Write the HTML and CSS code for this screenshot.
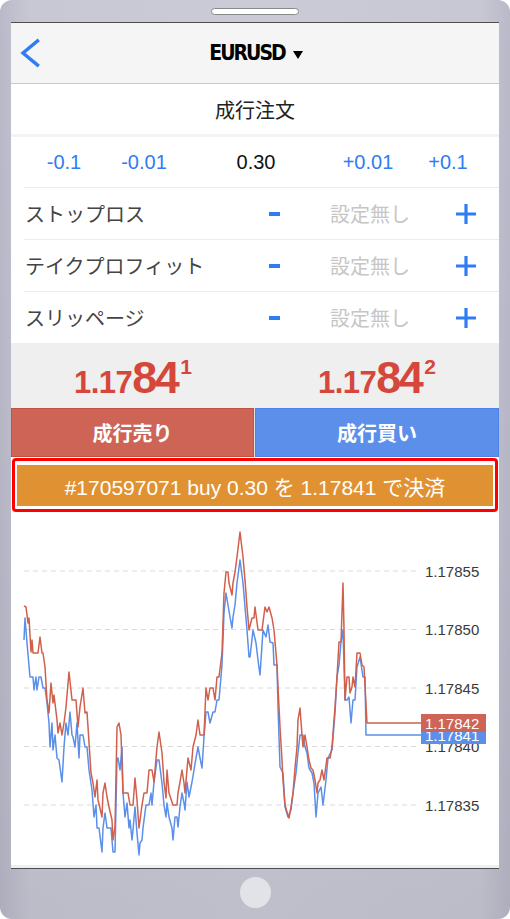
FILE: index.html
```html
<!DOCTYPE html>
<html lang="ja">
<head>
<meta charset="utf-8">
<title>EURUSD 成行注文</title>
<link rel="stylesheet" href="styles.css">
</head>
<body>
<div class="device">
  <div class="top-bezel"><div class="speaker"></div></div>
  <div class="screen">
    <header class="nav">
      <div class="back">
        <svg width="20" height="30" viewBox="0 0 20 30"><path d="M17.5 3 L3 15 L17.5 27" fill="none" stroke="#2f7cf3" stroke-width="3.4" stroke-linecap="square"/></svg>
      </div>
      <div class="title"><span class="title-text">EURUSD</span><svg class="caret" width="10" height="8" viewBox="0 0 10 8"><path d="M0 0 H10 L5 8 Z" fill="#000"/></svg></div>
      <div></div>
    </header>
    <div class="order-title">成行注文</div>
    <div class="divider"></div>
    <div class="lots">
      <span class="lot-step">-0.1</span>
      <span class="lot-step">-0.01</span>
      <span class="lot-value">0.30</span>
      <span class="lot-step">+0.01</span>
      <span class="lot-step">+0.1</span>
    </div>
    <div class="field">
      <span class="field-label">ストップロス</span>
      <span class="field-btn"><svg width="11" height="4" viewBox="0 0 11 4"><rect width="11" height="4" fill="#2f7cf3"/></svg></span>
      <span class="field-value">設定無し</span>
      <span class="field-btn"><svg width="20" height="20" viewBox="0 0 20 20"><path d="M10 0 V20 M0 10 H20" stroke="#2f7cf3" stroke-width="3.2"/></svg></span>
    </div>
    <div class="field">
      <span class="field-label">テイクプロフィット</span>
      <span class="field-btn"><svg width="11" height="4" viewBox="0 0 11 4"><rect width="11" height="4" fill="#2f7cf3"/></svg></span>
      <span class="field-value">設定無し</span>
      <span class="field-btn"><svg width="20" height="20" viewBox="0 0 20 20"><path d="M10 0 V20 M0 10 H20" stroke="#2f7cf3" stroke-width="3.2"/></svg></span>
    </div>
    <div class="field field-last">
      <span class="field-label">スリッページ</span>
      <span class="field-btn"><svg width="11" height="4" viewBox="0 0 11 4"><rect width="11" height="4" fill="#2f7cf3"/></svg></span>
      <span class="field-value">設定無し</span>
      <span class="field-btn"><svg width="20" height="20" viewBox="0 0 20 20"><path d="M10 0 V20 M0 10 H20" stroke="#2f7cf3" stroke-width="3.2"/></svg></span>
    </div>
    <div class="prices">
      <div class="price"><span class="p-small">1.17</span><span class="p-big">84</span><span class="p-sup">1</span></div>
      <div class="price"><span class="p-small">1.17</span><span class="p-big">84</span><span class="p-sup">2</span></div>
    </div>
    <div class="trade">
      <div class="trade-btn sell">成行売り</div>
      <div class="trade-btn buy">成行買い</div>
    </div>
    <div class="close-wrap">
      <div class="close-box">
        <div class="close-btn">#170597071 buy 0.30 を 1.17841 で決済</div>
      </div>
    </div>
    <div class="chart">
      <svg width="488" height="352" viewBox="11 513 488 352">
        <g class="grid">
          <line x1="24" x2="418" y1="571" y2="571"/>
          <line x1="24" x2="418" y1="629.5" y2="629.5"/>
          <line x1="24" x2="418" y1="688" y2="688"/>
          <line x1="24" x2="418" y1="746.5" y2="746.5"/>
          <line x1="24" x2="418" y1="805" y2="805"/>
        </g>
        <g class="axis-label">
          <text x="425" y="576.5">1.17855</text>
          <text x="425" y="635">1.17850</text>
          <text x="425" y="693.5">1.17845</text>
          <text x="425" y="752">1.17840</text>
          <text x="425" y="810.5">1.17835</text>
        </g>
        <polyline class="line-blue" points="24,640 25,618 27,643 30,677 33,677 34,690 36,677 37,690 39,677 41,677 43,688 45,688 47,703 49,723 50,747 52,723 53,750 55,735 57,758 59,760 62,782 64,747 66,723 68,735 70,712 72,735 73,737 75,747 77,723 79,758 80,735 83,735 85,747 87,747 89,770 92,790 94,817 96,805 97,828 99,828 102,852 103,828 105,813 107,828 111,828 113,852 115,852 117,758 118,758 120,770 122,747 123,793 125,817 127,803 129,828 130,820 132,840 133,830 135,807 137,833 139,855 140,843 142,840 143,828 146,805 149,805 151,793 152,805 154,782 157,760 159,760 162,783 164,805 166,817 167,803 169,817 172,828 173,840 175,817 177,817 178,827 180,807 182,793 184,803 185,810 187,782 189,797 192,782 194,770 196,758 198,747 200,758 202,768 204,737 206,712 208,712 210,723 213,712 215,712 217,700 219,700 222,665 224,613 226,593 228,605 230,617 232,628 233,617 235,605 237,583 240,560 243,583 245,607 247,630 249,657 250,657 253,630 256,643 258,660 260,675 263,630 266,637 268,625 270,642 273,643 274,665 277,665 278,707 280,767 283,773 285,807 288,817 291,810 293,793 296,773 298,753 300,735 303,735 305,747 307,753 309,768 312,773 314,783 316,817 318,793 321,787 323,805 326,780 328,758 332,750 335,713 337,677 339,665 341,642 343,630 345,700 347,700 349,697 351,723 353,700 355,700 357,667 360,657 363,677 365,677 366,735 421,735"/>
        <polyline class="line-red" points="24,606 26,607 28,623 29,618 31,652 32,640 33,653 38,653 40,637 42,653 43,653 45,667 47,700 49,713 51,683 53,703 54,695 57,720 58,733 60,723 62,735 64,723 66,707 69,672 72,700 76,700 78,727 80,707 83,688 85,713 87,712 88,727 91,773 93,783 95,797 97,780 98,800 102,817 103,793 105,783 107,797 109,807 112,820 113,840 115,827 117,727 119,723 121,735 123,793 128,793 130,805 133,805 135,778 137,800 139,828 142,805 144,793 147,793 149,770 152,770 154,782 157,747 159,732 162,753 164,782 166,798 167,770 169,793 173,805 177,805 178,793 180,782 182,770 184,783 185,793 188,758 191,770 193,747 196,735 198,720 200,735 204,735 206,688 208,700 210,688 213,688 215,700 217,677 219,677 222,653 224,593 226,572 228,572 229,583 232,595 233,583 235,572 237,557 240,532 243,557 245,580 247,607 249,630 252,618 254,618 255,607 257,622 258,630 262,630 265,607 267,612 269,607 272,618 274,630 277,665 278,687 280,727 282,760 283,780 285,805 287,812 289,818 291,807 293,793 295,768 297,747 298,720 300,708 302,735 303,747 305,735 307,747 309,760 311,768 313,770 315,780 317,793 318,783 320,780 322,770 324,780 327,758 330,758 332,747 335,707 337,677 339,642 341,642 343,583 344,630 345,700 347,677 349,677 350,693 352,687 353,677 355,687 357,653 360,653 362,665 364,667 367,723 421,723"/>
        <rect class="tag-blue" x="421" y="726" width="65" height="18"/>
        <text class="tag-text" x="425" y="740.5">1.17841</text>
        <rect class="tag-red" x="421" y="714" width="65" height="18"/>
        <text class="tag-text" x="425" y="728.5">1.17842</text>
      </svg>
    </div>
    <div class="screen-foot"></div>
  </div>
  <div class="bottom-bezel"><div class="home"></div></div>
</div>
</body>
</html>
```
FILE: styles.css
```css
* { box-sizing: border-box; }

body {
  margin: 0;
  background: #fff;
  font-family: "Liberation Sans", Arial, "Noto Sans CJK JP", sans-serif;
}

.device {
  width: 510px;
  height: 919px;
  border-radius: 12px;
  padding: 0 11px;
  display: flex;
  flex-direction: column;
  background:
    linear-gradient(180deg, rgba(255,255,255,0.04) 0, rgba(0,0,0,0) 40%, rgba(0,0,0,0.05) 100%),
    linear-gradient(90deg, #b6b6c6 0, #c6c6d3 6%, #c9c9d6 50%, #c6c6d3 94%, #b6b6c6 100%);
}

.top-bezel {
  height: 22px;
  display: flex;
  justify-content: center;
}

.speaker {
  width: 88px;
  height: 7px;
  margin-top: 8px;
  background: #fff;
  border: 1px solid #8a8a8a;
  border-radius: 4px;
}

.screen {
  height: 847px;
  border-top: 1px solid #4e4e4e;
  border-bottom: 1px solid #4e4e4e;
  background: #fff;
  display: flex;
  flex-direction: column;
}

.nav {
  height: 61px;
  flex: none;
  background: #f5f5f5;
  border-bottom: 1px solid #c9c9c9;
  display: grid;
  grid-template-columns: 1fr auto 1fr;
  align-items: center;
}

.back {
  padding-left: 9px;
  display: flex;
}

.title {
  display: flex;
  align-items: center;
  gap: 8px;
  color: #000;
  padding-left: 2px;
}

.title-text {
  font-family: "DejaVu Sans Condensed", "DejaVu Sans", sans-serif;
  font-stretch: condensed;
  font-size: 21px;
  font-weight: bold;
  letter-spacing: -2px;
}

.caret { margin-top: 3px; }

.order-title {
  height: 50px;
  flex: none;
  display: flex;
  align-items: center;
  justify-content: center;
  font-family: "Noto Sans CJK JP", sans-serif;
  font-size: 20px;
  color: #222;
}

.divider {
  height: 3px;
  flex: none;
  background: #f3f3f3;
}

.lots {
  height: 51px;
  flex: none;
  margin-left: 13px;
  border-bottom: 1px solid #ececec;
  display: grid;
  grid-template-columns: 80px 80px 144px 80px 80px;
  align-items: center;
  justify-items: center;
  font-size: 20px;
}

.lot-step { color: #2f7cf3; }
.lot-value { color: #111; }

.field {
  height: 52px;
  flex: none;
  margin-left: 13px;
  padding: 0 8px 0 1px;
  border-bottom: 1px solid #ececec;
  display: grid;
  grid-template-columns: 1fr 50px 142px 50px;
  align-items: center;
}

.field-last {
  height: 51px;
  border-bottom: none;
}

.field-label {
  font-family: "Noto Sans CJK JP", sans-serif;
  font-size: 20px;
  color: #444;
}

.field-btn {
  display: flex;
  justify-content: center;
  align-items: center;
}

.field-value {
  text-align: center;
  font-family: "Noto Sans CJK JP", sans-serif;
  font-size: 20px;
  color: #c6c6c6;
}

.prices {
  height: 65px;
  flex: none;
  background: #efefef;
  display: grid;
  grid-template-columns: 1fr 1fr;
  align-items: center;
  justify-items: center;
}

.price {
  color: #d4473a;
  font-weight: bold;
  white-space: nowrap;
  line-height: 1;
  padding-top: 4px;
}

.p-small { font-size: 31px; letter-spacing: -0.5px; }
.p-big { font-size: 45px; letter-spacing: -2.5px; }
.p-sup { font-size: 21px; vertical-align: 19px; margin-left: 3px; }

.trade {
  height: 49px;
  flex: none;
  display: grid;
  grid-template-columns: 243px 1fr;
  gap: 1px;
  background: #e4e4e4;
}

.trade-btn {
  display: flex;
  align-items: center;
  justify-content: center;
  color: #fff;
  font-family: "Noto Sans CJK JP", sans-serif;
  font-weight: bold;
  font-size: 20px;
}

.sell {
  background: #cd6456;
  border: 1px solid #c2513f;
}

.buy {
  background: #5b8fe9;
  border: 1px solid #4c83e6;
}

.close-wrap {
  height: 56px;
  flex: none;
  padding: 1px;
}

.close-box {
  height: 100%;
  border: 3px solid #ff0000;
  border-radius: 4px;
  padding: 4px 2px 3px;
  background: #fff;
}

.close-btn {
  height: 100%;
  background: #e09232;
  color: #fff;
  font-size: 21px;
  display: flex;
  align-items: center;
  justify-content: center;
  white-space: nowrap;
}

.chart {
  height: 352px;
  flex: none;
}

.chart svg { display: block; }

.grid line {
  stroke: #dadada;
  stroke-width: 1;
  stroke-dasharray: 5 4;
}

.axis-label text {
  font-family: "Liberation Sans", Arial, sans-serif;
  font-size: 15px;
  fill: #3a3a3a;
}

.line-blue {
  fill: none;
  stroke: #5b8fe9;
  stroke-width: 1.5;
  stroke-linejoin: round;
}

.line-red {
  fill: none;
  stroke: #d0604c;
  stroke-width: 1.5;
  stroke-linejoin: round;
}

.tag-blue { fill: #5b8fe9; }
.tag-red { fill: #cd6456; }

.tag-text {
  font-family: "Liberation Sans", Arial, sans-serif;
  font-size: 15px;
  fill: #fff;
}

.screen-foot {
  height: 3px;
  flex: none;
  background: #efefef;
}

.bottom-bezel {
  flex: 1;
  display: flex;
  justify-content: center;
}

.home {
  width: 31px;
  height: 31px;
  margin-top: 8px;
  border-radius: 50%;
  background: #e2e2e9;
}
```
